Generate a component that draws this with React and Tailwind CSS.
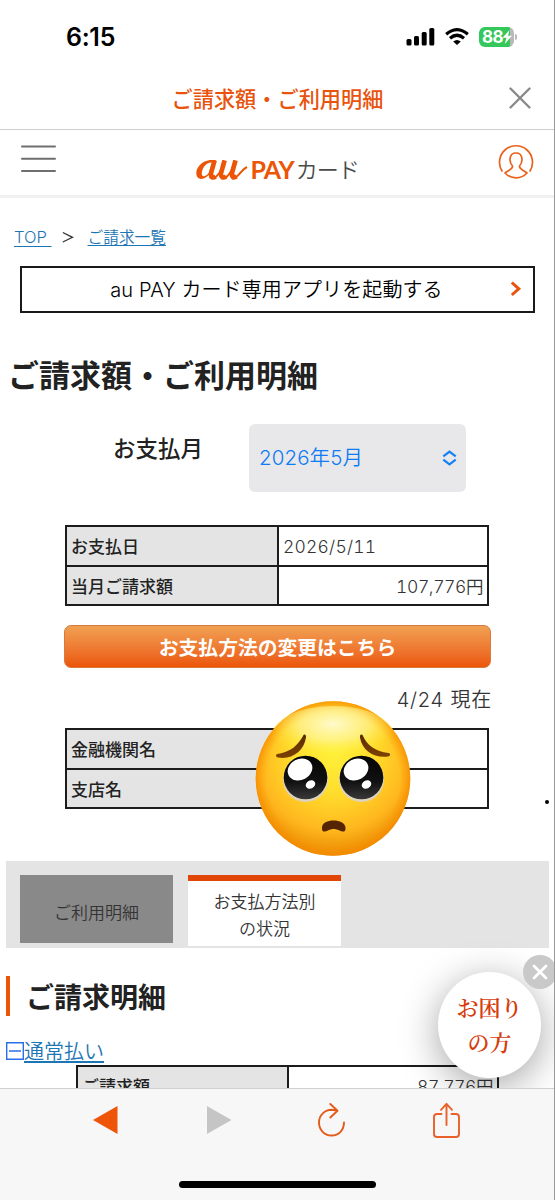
import React from "react";

function StatusBar() {
  return (
    <div className="flex h-[74px] items-center justify-between pl-[66px] pr-[38px]">
      <span className="font-['Inter'] text-[25px] font-semibold leading-none tracking-[-0.3px] text-black">6:15</span>
      <div className="flex items-center">
        <svg width="29" height="18" viewBox="0 0 29 18" className="mr-[10px]">
          <rect x="0.5" y="11" width="5" height="6.5" rx="1.5" />
          <rect x="8" y="8" width="5" height="9.5" rx="1.5" />
          <rect x="15.7" y="4" width="5" height="13.5" rx="1.5" />
          <rect x="23.3" y="0" width="5" height="17.5" rx="1.5" />
        </svg>
        <svg width="24" height="18" viewBox="0 0 24 18" fill="none" stroke="#000" strokeWidth="3.2" className="mr-[10px]">
          <path d="M1.2 6.3 Q12 -3 22.8 6.3" />
          <path d="M5 10.2 Q12 4.3 19 10.2" />
          <path d="M12 17 L8.2 13.4 Q12 10.4 15.8 13.4 Z" fill="#000" stroke="none" />
        </svg>
        <div className="flex h-[20px] w-[35px] items-center overflow-hidden rounded-[6px] bg-[linear-gradient(90deg,#34c759_0,#34c759_31px,#b9b9b9_31px)] pl-[3px]">
          <span className="font-['Inter'] text-[17px] font-bold leading-none tracking-[-0.5px] text-white">88</span>
          <svg width="11" height="14" viewBox="0 0 11 14" fill="#fff" className="-ml-px">
            <path d="M7.5 0 L0.5 7.8 H4.4 L2.8 14 L10 5.8 H6.2 Z" />
          </svg>
        </div>
        <div className="ml-[1px] h-[6px] w-[2px] rounded-r bg-[#b9b9b9]" />
      </div>
    </div>
  );
}

function TitleBar() {
  return (
    <div className="relative flex h-[56px] items-center justify-center border-b border-[#cfcfcf] pb-[7px]">
      <h2 className="text-[21.2px] font-medium leading-none text-[#e9530c]">ご請求額・ご利用明細</h2>
      <svg width="22" height="22" viewBox="0 0 22 22" stroke="#8a8a8a" strokeWidth="2.4" strokeLinecap="round" className="absolute right-[24px] top-[13px]">
        <path d="M1.5 1.5 L20.5 20.5 M20.5 1.5 L1.5 20.5" />
      </svg>
    </div>
  );
}

function Header() {
  return (
    <header className="flex h-[68px] items-start justify-between border-b-[3px] border-[#f1f1f1] pl-[21px] pr-[21px]">
      <svg width="35" height="28" viewBox="0 0 35 28" stroke="#6f6f6f" strokeWidth="2" strokeLinecap="round" className="mt-[15px]">
        <path d="M1 1.500 H34 M1 13.700 H34 M1 26 H34" />
      </svg>
      <div className="mt-[24px] flex h-[30px] w-[163px] items-center">
        <svg width="52" height="20" viewBox="0 0 52 20" fill="none" stroke="#eb5505" role="img" aria-label="au" className="mt-px shrink-0">
          <path d="M20.500 0.300 C17.500 -0.200 15.500 -0.200 13 0.200 C5 1.500 0.300 8 0.300 13 C0.300 21 9 21 15 12.500 L16 9 C11 16.500 5.800 18.500 5.800 13.500 C5.800 9 9.500 2.400 15.500 2.400 Z" fill="#eb5505" stroke="none" />
          <path d="M18.600 0.300 L15.300 12 C13.800 18.200 17.300 18 19.500 16.500" strokeWidth="4.700" />
          <path d="M18.500 17.800 C21.500 16 23 14 25.500 9.500" strokeWidth="1.900" />
          <path d="M28.600 0.300 L25.300 12 C23.800 18.200 27.500 17.900 30 16.700" strokeWidth="4.700" />
          <path d="M29 18 C32 16.500 34.500 12.500 36.500 8.500" strokeWidth="1.900" />
          <path d="M39.500 0.300 L36.300 12 C34.800 18.200 38 18 40.500 16.300" strokeWidth="4.700" />
          <path d="M39.500 17.400 C44.500 14.500 45 10 51 7" strokeWidth="2" />
        </svg>
        <span className="ml-[3px] w-[45px] font-['Lato'] text-[25px] font-bold leading-none tracking-[-0.9px] text-[#eb5505]">PAY</span>
        <span className="ml-[2px] mt-[-2px] whitespace-nowrap text-[22px] font-[350] leading-none tracking-[-1px] text-[#4a4a4a]">カード</span>
      </div>
      <svg width="36" height="36" viewBox="0 0 36 36" fill="none" stroke="#e9611c" strokeWidth="1.700" strokeLinecap="round" strokeLinejoin="round" className="mt-[14px]">
        <path d="M4 27 A16.500 16.500 0 1 1 32 27" />
        <path d="M14.500 22 C11 18.500 10.500 9 18 9 C25.500 9 25 18.500 21.500 22 C21 25.500 25 25.500 29 29 C23 35.500 13 35.500 7 29 C11 25.500 15 25.500 14.500 22 Z" />
      </svg>
    </header>
  );
}

function Row({ label, value, right, last, widths = "w-[212px]" }) {
  return (
    <div className={"flex h-[40px] " + (last ? "" : "border-b-2 border-[#1c1c1c]")}>
      <div className={"flex items-center border-r-2 border-[#1c1c1c] bg-[#e4e4e4] pl-[4px] text-[17px] font-medium leading-none text-[#222] " + widths + (last ? " pb-[3px]" : " pb-[2px]")}>{label}</div>
      <div className={"flex flex-1 items-center px-[4px] font-['Inter','Noto_Sans_CJK_JP',sans-serif] text-[17.500px] font-[350] leading-none tabular-nums text-[#333] " + (right ? "justify-end tracking-[-0.4px]" : "tracking-[0.2px]") + (last ? " pb-[1px]" : " pt-[2px]")}>{value}</div>
    </div>
  );
}

function PleadingFace() {
  return (
    <svg width="156" height="156" viewBox="0 0 156 156" className="absolute left-[255px] top-[700px]">
      <defs>
        <radialGradient id="face" cx="0.5" cy="0.34" r="0.66">
          <stop offset="0" stopColor="#fff03a" />
          <stop offset="0.4" stopColor="#ffdc2c" />
          <stop offset="0.75" stopColor="#ffb71e" />
          <stop offset="1" stopColor="#e88800" />
        </radialGradient>
        <radialGradient id="rim" cx="0.5" cy="0.5" r="0.5">
          <stop offset="0.86" stopColor="#ff9500" stopOpacity="0" />
          <stop offset="1" stopColor="#f58a00" stopOpacity="0.75" />
        </radialGradient>
        <radialGradient id="shine" cx="0.5" cy="0.3" r="0.55">
          <stop offset="0" stopColor="#fffbd5" stopOpacity="0.95" />
          <stop offset="0.5" stopColor="#fff9ad" stopOpacity="0.6" />
          <stop offset="1" stopColor="#fff52f" stopOpacity="0" />
        </radialGradient>
        <linearGradient id="eye" x1="0" y1="0" x2="0" y2="1">
          <stop offset="0" stopColor="#050505" />
          <stop offset="0.6" stopColor="#111" />
          <stop offset="1" stopColor="#393939" />
        </linearGradient>
        <linearGradient id="brow" x1="0" y1="0" x2="0" y2="1">
          <stop offset="0" stopColor="#5a2b02" />
          <stop offset="1" stopColor="#7d4202" />
        </linearGradient>
      </defs>
      <circle cx="78" cy="78.500" r="77.300" fill="url(#face)" />
      <circle cx="78" cy="78.500" r="77.300" fill="url(#rim)" />
      <ellipse cx="78" cy="36" rx="62" ry="30" fill="url(#shine)" />
      <ellipse cx="50.500" cy="79.500" rx="22.500" ry="22.500" fill="#dfd3bd" />
      <ellipse cx="106.500" cy="79.500" rx="22.500" ry="22.500" fill="#dfd3bd" />
      <circle cx="50.500" cy="77.500" r="21.800" fill="url(#eye)" />
      <circle cx="106.500" cy="77.500" r="21.800" fill="url(#eye)" />
      <ellipse cx="45" cy="69.500" rx="12.800" ry="10.500" fill="#fff" transform="rotate(-28 45 69.500)" />
      <ellipse cx="101" cy="69.500" rx="12.800" ry="10.500" fill="#fff" transform="rotate(-28 101 69.500)" />
      <ellipse cx="55.500" cy="84.500" rx="5" ry="4" fill="#fff" transform="rotate(-28 55.500 84.500)" />
      <ellipse cx="111.500" cy="84.500" rx="5" ry="4" fill="#fff" transform="rotate(-28 111.500 84.500)" />
      <path d="M22.500 54 C36 52 43 45 48 36 C49 33.500 51.500 34.500 51 37.500 C49 51 37 60 23 57.500 C20.500 57 20.500 54.300 22.500 54 Z" fill="url(#brow)" />
      <path d="M133.500 53 C120 51.500 112 45 108 36 C107 33.500 104.500 34.500 105 37.500 C107 51 120 58.500 133 56.500 C136 56 135.500 53.200 133.500 53 Z" fill="url(#brow)" />
      <path d="M67 127.500 C67 118 90 118 90.500 127.500 C91 132 88 132.500 84.500 130.500 C80 128.500 77 128.500 73 130.500 C69.500 132.500 66.500 132 67 127.500 Z" fill="#552402" />
    </svg>
  );
}

function HelpBubble() {
  return (
    <div className="absolute left-[438px] top-[972px] flex h-[106px] w-[103px] flex-col items-center justify-center rounded-[50%] bg-white pb-[2px] font-['Noto_Serif_CJK_JP','Noto_Serif_JP','Noto_Sans_CJK_JP',serif] text-[22px] font-semibold leading-[35px] text-[#d63c0c] shadow-[0_8px_38px_rgba(0,0,0,0.36)]">
      <span>お困り</span>
      <span>の方</span>
    </div>
  );
}

function Toolbar() {
  return (
    <footer className="absolute inset-x-0 bottom-0 flex h-[112px] flex-col items-center border-t border-[#cfcfcf] bg-[#f7f7f7]">
      <div className="flex h-[62px] w-full items-center pl-[93px]">
        <svg width="25" height="28" viewBox="0 0 25 28" fill="#ee5508"><path d="M0 14 L24.500 0 V28 Z" /></svg>
        <svg width="25" height="28" viewBox="0 0 25 28" fill="#c5c5c5" className="ml-[89px]"><path d="M0 0 V28 L24.500 14 Z" /></svg>
        <svg width="30" height="36" viewBox="0 0 30 36" fill="none" stroke="#e45a18" strokeWidth="1.900" strokeLinecap="round" strokeLinejoin="round" className="ml-[85px]">
          <path d="M27 20.500 C27 28 22 33.500 14.500 33.500 C7.500 33.500 2 28 2 20.500 C2 13 8 7.800 14.500 7.800 L20 8.500 M13.300 2 L20.500 8.800 L13.300 15.500" />
        </svg>
        <svg width="30" height="37" viewBox="0 0 30 37" fill="none" stroke="#e8602a" strokeWidth="1.900" strokeLinecap="round" strokeLinejoin="round" className="ml-[85px]">
          <path d="M9.500 12 H5 C3 12 2 13 2 15 V32 C2 34 3 35 5 35 H24 C26 35 27 34 27 32 V15 C27 13 26 12 24 12 H19.500 M14.500 23 V2.500 M9 7.800 L14.500 1.800 L20 7.800" />
        </svg>
      </div>
      <div className="mt-[30px] h-[7px] w-[197px] rounded-full bg-black" />
    </footer>
  );
}

export default function App() {
  return (
    <div className="relative flex h-[1200px] w-[555px] flex-col overflow-hidden bg-white font-['Noto_Sans_CJK_JP',sans-serif]">
      <StatusBar />
      <TitleBar />
      <Header />

      <nav className="mt-[28px] flex h-[22px] items-center pl-[14px] text-[16px] font-[350] leading-[20px] text-[#1c75b5]">
        <a className="whitespace-pre font-['Inter'] text-[16.500px] font-light underline underline-offset-[3px]">TOP </a>
        <svg width="12" height="13" viewBox="0 0 12 13" fill="none" stroke="#333" strokeWidth="1.300" className="ml-[10px] mr-[14px]"><path d="M0.800 1.500 L10.500 6.300 L0.800 11" /></svg>
        <a className="text-[15.700px] underline underline-offset-2">ご請求一覧</a>
      </nav>

      <button className="relative ml-[20px] mt-[18px] flex h-[47px] w-[515px] items-center justify-center border-2 border-[#1a1a1a] pr-[2px] font-['Inter','Noto_Sans_CJK_JP',sans-serif] text-[20px] font-[350] leading-none tracking-[0.1px] text-black">
        au PAY カード専用アプリを起動する
        <svg width="12" height="16" viewBox="0 0 12 16" fill="none" stroke="#e9530c" strokeWidth="3" className="absolute right-[11px] top-[13px]">
          <path d="M1.800 1.500 L8.800 7.800 L1.800 14" />
        </svg>
      </button>

      <h1 className="mt-[40px] h-[44px] pl-[8px] text-[31px] font-bold leading-[42px] text-[#222]">ご請求額・ご利用明細</h1>

      <div className="mt-[27px] flex h-[68px] items-start">
        <span className="ml-[113px] w-[136px] pt-[7px] text-[22.500px] font-medium leading-[32px] text-[#222]">お支払月</span>
        <div className="flex h-[68px] w-[217px] items-center justify-between rounded-[6px] bg-[#e8e8ea] pl-[10px] pr-[9px] text-[20.500px] leading-none text-[#0f7bf5]">
          <span className="font-['Inter','Noto_Sans_CJK_JP',sans-serif] font-[350] tracking-[0.1px]">2026年5月</span>
          <svg width="15" height="16" viewBox="0 0 15 16" fill="none" stroke="#1480f5" strokeWidth="2.200">
            <path d="M1.300 6.300 L7.500 1.600 L13.700 6.300 M1.300 9.700 L7.500 14.400 L13.700 9.700" />
          </svg>
        </div>
      </div>

      <div className="ml-[65px] mt-[33px] h-[81px] w-[424px] overflow-hidden border-2 border-[#1c1c1c]">
        <Row label="お支払日" value="2026/5/11" />
        <Row label="当月ご請求額" value="107,776円" right last />
      </div>

      <button className="ml-[64px] mt-[19px] flex h-[43px] w-[427px] items-center justify-center rounded-[7px] border border-[#d67b3d] bg-gradient-to-b from-[#f0a052] to-[#eb5505] text-[19.800px] font-bold leading-none text-white">
        お支払方法の変更はこちら
      </button>

      <p className="mr-[63px] mt-[18px] h-[28px] text-right font-['Inter','Noto_Sans_CJK_JP',sans-serif] text-[20px] font-[350] leading-[29px] tracking-[0.8px] text-[#333]">4/24 現在</p>

      <div className="ml-[65px] mt-[14px] h-[81px] w-[424px] overflow-hidden border-2 border-[#1c1c1c]">
        <Row label="金融機関名" value="" />
        <Row label="支店名" value="" last />
      </div>

      <div className="ml-[6px] mt-[52px] flex h-[87px] w-[543px] gap-[15px] bg-[#e4e4e4] pl-[14px] pt-[14px]">
        <div className="flex h-[68px] w-[153px] items-center justify-center bg-[#898989] pt-[6px] text-[17px] font-[350] text-[#333]">ご利用明細</div>
        <div className="h-[71px] w-[153px] border-t-[6px] border-[#e14607] bg-white pt-[6px] text-center text-[17px] font-[350] leading-[27px] text-[#333]">
          お支払方法別<br />の状況
        </div>
      </div>

      <h2 className="ml-[6px] mt-[28px] h-[40px] border-l-[4px] border-[#eb5505] pl-[16px] text-[28px] font-bold leading-[40px] text-[#222]">ご請求明細</h2>

      <div className="ml-[6px] mt-[23px] flex h-[24px] items-center text-[20px] font-[350] leading-[24px] text-[#1c75b5]">
        <svg width="18" height="18" viewBox="0 0 18 18" fill="none" stroke="#286fec" strokeWidth="1.400">
          <path d="M0.700 0.700 H17.300 V17.300 H0.700 Z M3 9 H15" />
        </svg>
        <a className="underline underline-offset-2">通常払い</a>
      </div>

      <div className="ml-[76px] mt-[2px] w-[423px] border-2 border-[#1c1c1c]">
        <Row label="ご請求額" value="87,776円" right last widths="w-[211px]" />
      </div>

      <PleadingFace />
      <div className="absolute left-[545px] top-[800px] h-[4px] w-[4px] rounded-full bg-black" />
      <HelpBubble />
      <div className="absolute left-[523px] top-[955px] flex size-[34px] items-center justify-center rounded-full bg-[#c9c9c9]">
        <svg width="16" height="16" viewBox="0 0 16 16" stroke="#fff" strokeWidth="2.800" strokeLinecap="round"><path d="M2 2 L14 14 M14 2 L2 14" /></svg>
      </div>
      <Toolbar />
      <div className="absolute right-0 top-0 h-full w-px bg-[#999]" />
    </div>
  );
}
